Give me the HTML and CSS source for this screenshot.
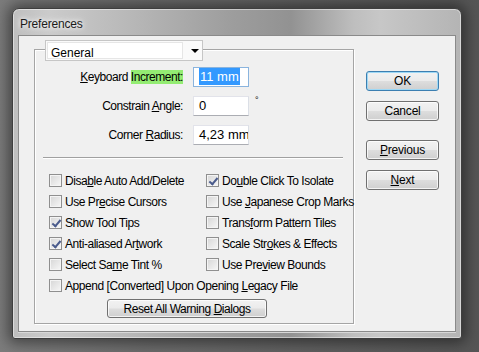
FILE: index.html
```html
<!DOCTYPE html>
<html lang="en">
<head>
  <meta charset="UTF-8" />
  <title>Preferences</title>
  <link rel="stylesheet" href="styles.css">
</head>
<body>

  <!-- Dialog window -->
  <div class="window">
    <div class="titlebar">Preferences</div>

    <div class="client">

      <!-- General group -->
      <div class="group">
        <div class="combo">
          <span class="combo-value">General</span>
          <span class="combo-arrow"></span>
        </div>

        <div class="fields">
          <div class="field-row">
            <span class="field-label"><u>K</u>eyboard <span class="hl">Increment:</span></span>
            <span class="textbox focused"><span class="sel">11 mm</span></span>
          </div>
          <div class="field-row">
            <span class="field-label">Constrain <u>A</u>ngle:</span>
            <span class="textbox">0</span>
            <span class="degree">°</span>
          </div>
          <div class="field-row">
            <span class="field-label">Corner <u>R</u>adius:</span>
            <span class="textbox">4,23 mm</span>
          </div>
        </div>

        <div class="sep"></div>

        <div class="checks">
          <label class="check"><span class="box"></span><span>Disa<u>b</u>le Auto Add/Delete</span></label>
          <label class="check"><span class="box checked"></span><span>Do<u>u</u>ble Click To Isolate</span></label>
          <label class="check"><span class="box"></span><span>Use Pr<u>e</u>cise Cursors</span></label>
          <label class="check"><span class="box"></span><span>Use <u>J</u>apanese Crop Marks</span></label>
          <label class="check"><span class="box checked"></span><span>Show Tool Tips</span></label>
          <label class="check"><span class="box"></span><span>Trans<u>f</u>orm Pattern Tiles</span></label>
          <label class="check"><span class="box checked"></span><span>Anti-aliased Ar<u>t</u>work</span></label>
          <label class="check"><span class="box"></span><span>Scale Str<u>o</u>kes &amp; Effects</span></label>
          <label class="check"><span class="box"></span><span>Select Sa<u>m</u>e Tint %</span></label>
          <label class="check"><span class="box"></span><span>Use Pre<u>v</u>iew Bounds</span></label>
          <label class="check wide"><span class="box"></span><span>Append [Converted] Upon Opening <u>L</u>egacy File</span></label>
        </div>

        <button class="btn reset">Reset All Warning <u>D</u>ialogs</button>
      </div>

      <!-- Dialog buttons -->
      <div class="buttons">
        <button class="btn default">OK</button>
        <button class="btn">Cancel</button>
        <button class="btn prev"><u>P</u>revious</button>
        <button class="btn"><u>N</u>ext</button>
      </div>

    </div>
  </div>

</body>
</html>
```

FILE: styles.css
```css
* {
  margin: 0;
  padding: 0;
  box-sizing: border-box;
}

body {
  width: 479px;
  height: 352px;
  overflow: hidden;
  padding: 8px 0 0 12px;
  background: linear-gradient(to right, #7c7c7c, #6c6c6c 30%, #5e5e5e 70%, #555 100%);
  font-family: "Liberation Sans", Arial, sans-serif;
  font-size: 12px;
  letter-spacing: -0.45px;
  color: #000;
}

u {
  text-decoration: underline;
  text-underline-offset: 1px;
}

/* window frame */

.window {
  width: 450px;
  height: 331px;
  padding: 0 5px 6px 5px;
  border: 1px solid #3e3e3e;
  border-radius: 7px 7px 3px 3px;
  background: linear-gradient(to right, #bebebe 0%, #cbcbcb 8%, #b9b9b9 25%, #9e9e9e 48%, #929292 62%, #bebebe 76%, #c7c7c7 82%, #b4b4b4 100%);
  box-shadow: 0 0 14px 4px rgba(0, 0, 0, 0.45), inset 0 0 0 1px rgba(255, 255, 255, 0.45);
}

.titlebar {
  height: 26px;
  padding: 8px 0 0 2px;
  font-size: 12px;
  letter-spacing: -0.2px;
  color: #1b1b1b;
  text-shadow: 0 0 8px #fff, 0 0 4px #fff;
}

.client {
  height: 297px;
  display: flex;
  gap: 12px;
  padding: 13px 0 0 15px;
  background-color: #f0f0f0;
  border: 1px solid #8a8a8a;
  box-shadow: 0 1px 0 #d8d8d8;
}

/* group box */

.group {
  width: 320px;
  height: 275px;
  border: 1px solid #a5a5a5;
  box-shadow: inset 1px 1px 0 #fff, 1px 1px 0 #fff;
}

.combo {
  display: flex;
  width: 158px;
  height: 21px;
  margin: -10px 0 0 10px;
  padding: 1px;
  background-color: #fafafa;
  border: 1px solid #c6c6c6;
}

.combo-value {
  flex: 1;
  padding: 3px 0 0 3px;
  background-color: #fff;
  border: 1px solid #e6e6e6;
  letter-spacing: 0;
}

.combo-arrow {
  width: 18px;
  position: relative;
}

.combo-arrow::after {
  content: "";
  position: absolute;
  left: 8px;
  top: 7px;
  border-left: 4px solid transparent;
  border-right: 4px solid transparent;
  border-top: 4px solid #000;
}

.fields {
  display: flex;
  flex-direction: column;
  gap: 9px;
  margin-top: 6px;
}

.field-row {
  display: flex;
  align-items: center;
  height: 20px;
}

.field-label {
  width: 148px;
  margin-right: 10px;
  text-align: right;
}

.hl {
  background-color: #94ec73;
}

.textbox {
  width: 56px;
  height: 20px;
  padding: 0 0 0 5px;
  line-height: 18px;
  font-size: 13px;
  letter-spacing: 0;
  white-space: nowrap;
  overflow: hidden;
  background-color: #fff;
  border: 1px solid #abadb3;
  border-top-color: #e2e3ea;
  border-left-color: #e2e3ea;
  border-right-color: #dbdfe6;
}

.textbox.focused {
  border-color: #8ab4de;
}

.sel {
  background-color: #3399ff;
  color: #fff;
  padding: 1px 1px;
}

.degree {
  align-self: flex-start;
  margin: -1px 0 0 6px;
  font-size: 9px;
}

.sep {
  width: 300px;
  height: 2px;
  margin: 12px 0 0 8px;
  border-top: 1px solid #a0a0a0;
  border-bottom: 1px solid #fff;
}

/* check boxes */

.checks {
  display: grid;
  grid-template-columns: 157px auto;
  grid-auto-rows: 21px;
  margin: 11px 0 0 14px;
}

.check {
  display: flex;
  align-items: center;
  gap: 3px;
  white-space: nowrap;
}

.check.wide {
  grid-column: 1 / -1;
}

.box {
  width: 13px;
  height: 13px;
  border: 1px solid #8f8f8f;
  background: linear-gradient(135deg, #d6d6d6, #f7f7f7);
  box-shadow: inset 0 0 0 1px #f4f4f4;
  position: relative;
}

.box.checked::after {
  content: "";
  position: absolute;
  left: 4px;
  top: 1px;
  width: 3px;
  height: 7px;
  border-right: 2px solid #4a5b8c;
  border-bottom: 2px solid #4a5b8c;
  transform: rotate(40deg);
}

/* buttons */

.btn {
  display: block;
  width: 73px;
  height: 20px;
  font-family: inherit;
  font-size: 12px;
  letter-spacing: -0.2px;
  color: #000;
  border: 1px solid #707070;
  border-radius: 3px;
  background: linear-gradient(#f2f2f2 0%, #ebebeb 48%, #dddddd 52%, #cfcfcf 100%);
  box-shadow: inset 0 0 0 1px rgba(255, 255, 255, 0.75);
}

.btn.default {
  border-color: #3c7fb1;
  box-shadow: inset 0 0 0 1px #9ed8f5;
}

.reset {
  width: 160px;
  height: 19px;
  margin: 3px 0 0 72px;
  letter-spacing: -0.45px;
}

.buttons {
  display: flex;
  flex-direction: column;
  gap: 10px;
  padding-top: 22px;
}

.buttons .prev {
  margin-top: 9px;
}
```
